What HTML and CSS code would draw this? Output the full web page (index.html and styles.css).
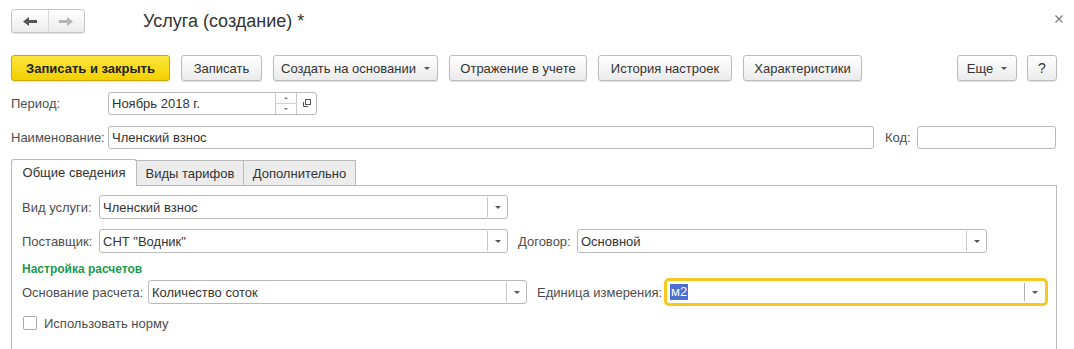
FILE: index.html
```html
<!DOCTYPE html>
<html lang="ru">
<head>
<meta charset="utf-8">
<title>Услуга (создание)</title>
<link rel="stylesheet" href="styles.css">
</head>
<body>
<div class="window">
  <div class="header">
    <div class="nav">
      <div class="nav-btn">
        <svg width="14" height="9" viewBox="0 0 14 9"><path d="M0 4.5 L6 0 V3 H14 V6 H6 V9 Z" fill="#555"/></svg>
      </div>
      <div class="nav-btn">
        <svg width="14" height="9" viewBox="0 0 14 9"><path d="M14 4.5 L8 0 V3 H0 V6 H8 V9 Z" fill="#b4b4b4"/></svg>
      </div>
    </div>
    <div class="title">Услуга (создание) *</div>
    <div class="close">
      <svg width="8" height="8" viewBox="0 0 8 8"><path d="M0.5 0.5 L7.5 7.5 M7.5 0.5 L0.5 7.5" stroke="#777" stroke-width="1.1"/></svg>
    </div>
  </div>

  <div class="toolbar">
    <div class="btn btn-primary w-save-close">Записать и закрыть</div>
    <div class="btn w-save">Записать</div>
    <div class="btn w-create">Создать на основании <span class="caret"></span></div>
    <div class="btn w-reflect">Отражение в учете</div>
    <div class="btn w-history">История настроек</div>
    <div class="btn w-chars">Характеристики</div>
    <div class="toolbar-right">
      <div class="btn w-more">Еще <span class="caret"></span></div>
      <div class="btn w-help">?</div>
    </div>
  </div>

  <div class="row row-top">
    <div class="label lw-top">Период:</div>
    <div class="field f-period">
      <div class="value">Ноябрь 2018 г.</div>
      <div class="spin">
        <div class="spin-half"><span class="tri-up"></span></div>
        <div class="spin-half spin-low"><span class="tri-down"></span></div>
      </div>
      <div class="fbtn">
        <svg width="9" height="9" viewBox="0 0 9 9"><rect x="3.5" y="0.5" width="5" height="5" fill="none" stroke="#555"/><path d="M1.5 3 V7.5 H6" fill="none" stroke="#555"/></svg>
      </div>
    </div>
  </div>

  <div class="row row-top row-name">
    <div class="label lw-top">Наименование:</div>
    <div class="field f-name"><div class="value">Членский взнос</div></div>
    <div class="label lw-code">Код:</div>
    <div class="field f-code"><div class="value"></div></div>
  </div>

  <div class="tabs">
    <div class="tab-strip">
      <div class="tab tab-active t1">Общие сведения</div>
      <div class="tab t2">Виды тарифов</div>
      <div class="tab t3">Дополнительно</div>
    </div>
    <div class="panel">
      <div class="row prow">
        <div class="label lw-kind">Вид услуги:</div>
        <div class="field f-kind">
          <div class="value">Членский взнос</div>
          <div class="dd"><span class="tri-down dark"></span></div>
        </div>
      </div>
      <div class="row prow gap10">
        <div class="label lw-kind">Поставщик:</div>
        <div class="field f-kind">
          <div class="value">СНТ "Водник"</div>
          <div class="dd"><span class="tri-down dark"></span></div>
        </div>
        <div class="label lw-contract">Договор:</div>
        <div class="field f-contract">
          <div class="value">Основной</div>
          <div class="dd"><span class="tri-down dark"></span></div>
        </div>
      </div>
      <div class="group-title">Настройка расчетов</div>
      <div class="row prow row-calc">
        <div class="label lw-basis">Основание расчета:</div>
        <div class="field f-basis">
          <div class="value">Количество соток</div>
          <div class="dd"><span class="tri-down dark"></span></div>
        </div>
        <div class="label lw-unit">Единица измерения:</div>
        <div class="field f-unit focused">
          <div class="value"><span class="sel">м2</span></div>
          <div class="dd dd-wide"><span class="tri-down dark"></span></div>
        </div>
      </div>
      <div class="check-row">
        <span class="checkbox"></span>
        <span class="check-label">Использовать норму</span>
      </div>
    </div>
  </div>
</div>
</body>
</html>
```

FILE: styles.css
```css
* { box-sizing: border-box; }

html, body {
  margin: 0;
  padding: 0;
  background: #fff;
}

body {
  width: 1074px;
  height: 349px;
  overflow: hidden;
  font-family: "Liberation Sans", Arial, sans-serif;
  font-size: 13px;
  color: #333;
}

/* header */
.header {
  display: flex;
  align-items: center;
  height: 24px;
  margin: 9px 0 0 11px;
}

.nav {
  display: flex;
  width: 74px;
  height: 24px;
  border: 1px solid #c6c6c6;
  border-radius: 3px;
  background: linear-gradient(#ffffff, #ececec);
  box-shadow: 0 1px 1px rgba(0, 0, 0, 0.12);
}

.nav-btn {
  flex: 1;
  display: flex;
  align-items: center;
  justify-content: center;
}

.nav-btn + .nav-btn {
  border-left: 1px solid #d8d8d8;
}

.title {
  margin-left: 58px;
  font-size: 18px;
  color: #333;
}

.close {
  margin-left: auto;
  margin-right: 11px;
  display: flex;
  align-items: center;
  height: 8px;
  margin-top: -4px;
}

/* toolbar */
.toolbar {
  display: flex;
  align-items: center;
  gap: 11px;
  height: 26px;
  margin: 22px 17px 0 11px;
}

.toolbar-right {
  display: flex;
  gap: 10px;
  margin-left: auto;
}

.btn {
  display: flex;
  align-items: center;
  justify-content: center;
  height: 26px;
  border: 1px solid #bcbcbc;
  border-radius: 3px;
  background: linear-gradient(#ffffff, #ebebeb);
  box-shadow: 0 1px 1px rgba(0, 0, 0, 0.12);
  color: #333;
  white-space: nowrap;
}

.btn-primary {
  background: linear-gradient(#fde63c, #f3d000);
  border-color: #c9a900;
  font-weight: bold;
  color: #222;
}

.w-save-close { width: 159px; }
.w-save { width: 81px; }
.w-create { width: 165px; }
.w-reflect { width: 138px; }
.w-history { width: 134px; }
.w-chars { width: 119px; }
.w-more { width: 60px; }
.w-help { width: 30px; font-size: 14px; }

.caret {
  display: inline-block;
  width: 0;
  height: 0;
  margin-left: 8px;
  border-left: 3px solid transparent;
  border-right: 3px solid transparent;
  border-top: 3px solid #555;
}

/* rows */
.row {
  display: flex;
  align-items: center;
}

.row-top {
  margin: 11px 0 0 11px;
}

.label {
  color: #4d4d4d;
  white-space: nowrap;
}

.lw-top { width: 97px; }
.lw-code { width: 32px; margin-left: 11px; }
.lw-kind { width: 77px; }
.lw-contract { width: 59px; margin-left: 10px; }
.lw-basis { width: 126px; }
.lw-unit { width: 129px; margin-left: 10px; }

.field {
  display: flex;
  height: 24px;
  border: 1px solid #b9b9b9;
  border-radius: 3px;
  background: #fff;
}

.row-top .field { height: 23px; }

.value {
  flex: 1;
  display: flex;
  align-items: center;
  padding-left: 3px;
  color: #333;
  white-space: nowrap;
  overflow: hidden;
}

.f-period { width: 209px; }
.f-name { width: 766px; }
.f-code { width: 139px; }
.f-kind { width: 409px; }
.f-contract { width: 410px; }
.f-basis { width: 379px; }
.f-unit { width: 380px; }

.spin {
  width: 21px;
  display: flex;
  flex-direction: column;
  border-left: 1px solid #c8c8c8;
}

.spin-half {
  flex: 1;
  display: flex;
  align-items: center;
  justify-content: center;
}

.spin-low {
  border-top: 1px solid #d2d2d2;
}

.fbtn {
  width: 20px;
  display: flex;
  align-items: center;
  justify-content: center;
  border-left: 1px solid #c8c8c8;
}

.tri-up {
  width: 0;
  height: 0;
  border-left: 2px solid transparent;
  border-right: 2px solid transparent;
  border-bottom: 2px solid #777;
}

.tri-down {
  width: 0;
  height: 0;
  border-left: 2px solid transparent;
  border-right: 2px solid transparent;
  border-top: 2px solid #777;
}

.tri-down.dark {
  border-left-width: 3px;
  border-right-width: 3px;
  border-top: 3px solid #555;
}

.dd {
  width: 20px;
  margin: 1px 0;
  display: flex;
  align-items: center;
  justify-content: center;
  border-left: 1px solid #c8c8c8;
}

.dd-wide { width: 21px; }

.focused {
  border-color: #f7c81e;
  box-shadow: 0 0 0 2px #f7c81e;
}

.focused .dd { margin: 2px 0; border-left-color: #b0b0b0; }

.sel {
  background: #4b6ed2;
  color: #fff;
  padding: 0 1px;
  line-height: 16px;
}

/* tabs */
.tabs {
  margin: 10px 0 0 11px;
}

.tab-strip {
  display: flex;
  align-items: flex-start;
  height: 27px;
  margin-bottom: -1px;
  position: relative;
  z-index: 2;
}

.tab {
  display: flex;
  align-items: center;
  justify-content: center;
  height: 25px;
  margin-top: 1px;
  border: 1px solid #b9b9b9;
  border-bottom: none;
  background: #ececec;
  color: #333;
  white-space: nowrap;
}

.tab + .tab { margin-left: -1px; }

.tab-active {
  height: 27px;
  margin-top: 0;
  background: #fff;
  border-radius: 3px 3px 0 0;
  padding-bottom: 1px;
}

.t1 { width: 126px; }
.t2 { width: 108px; }
.t3 { width: 113px; }

.panel {
  position: relative;
  z-index: 1;
  width: 1046px;
  height: 164px;
  border: 1px solid #b9b9b9;
  border-bottom: none;
  padding: 9px 0 0 10px;
}

.gap10 { margin-top: 10px; }

.group-title {
  margin-top: 9px;
  height: 15px;
  line-height: 15px;
  font-size: 12px;
  font-weight: bold;
  color: #1d9a4c;
}

.row-calc { margin-top: 3px; }

.check-row {
  display: flex;
  align-items: center;
  margin: 11px 0 0 1px;
  height: 16px;
}

.checkbox {
  width: 14px;
  height: 14px;
  border: 1px solid #a9a9a9;
  border-radius: 2px;
  background: #fff;
}

.check-label {
  margin-left: 7px;
  color: #4d4d4d;
}
```
